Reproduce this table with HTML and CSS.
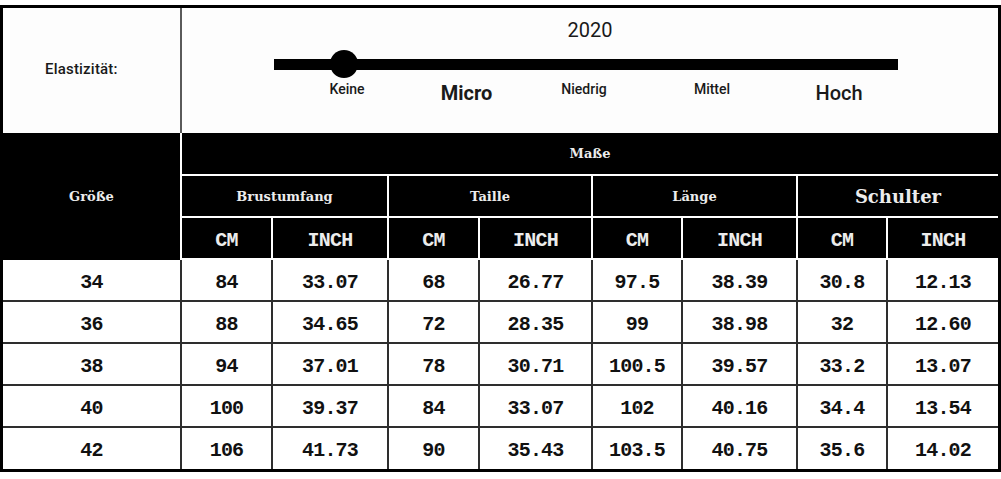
FILE: index.html
```html
<!DOCTYPE html>
<html lang="de">
<head>
<meta charset="utf-8">
<link rel="stylesheet" href="styles.css">
</head>
<body>
<table class="chart">
  <colgroup>
    <col class="c-size">
    <col class="c-91"><col class="c-116">
    <col class="c-91"><col class="c-113">
    <col class="c-90"><col class="c-115">
    <col class="c-90"><col class="c-110">
  </colgroup>
  <tr class="r-top">
    <td class="elast">Elastizität:</td>
    <td class="scale" colspan="8">
      <div class="year">2020</div>
      <div class="bar"><span class="knob"></span></div>
      <div class="labels">
        <span class="lbl sm">Keine</span>
        <span class="lbl lg b">Micro</span>
        <span class="lbl sm">Niedrig</span>
        <span class="lbl sm">Mittel</span>
        <span class="lbl lg">Hoch</span>
      </div>
    </td>
  </tr>
  <tr class="r-h1">
    <th class="hd size" rowspan="3">Größe</th>
    <th class="hd last" colspan="8">Maße</th>
  </tr>
  <tr class="r-h2">
    <th class="hd" colspan="2">Brustumfang</th>
    <th class="hd" colspan="2">Taille</th>
    <th class="hd" colspan="2">Länge</th>
    <th class="hd big last" colspan="2">Schulter</th>
  </tr>
  <tr class="r-h3">
    <th class="hd unit">CM</th><th class="hd unit">INCH</th>
    <th class="hd unit">CM</th><th class="hd unit">INCH</th>
    <th class="hd unit">CM</th><th class="hd unit">INCH</th>
    <th class="hd unit">CM</th><th class="hd unit last">INCH</th>
  </tr>
  <tr class="r-d">
    <td class="d">34</td><td class="d">84</td><td class="d">33.07</td><td class="d">68</td><td class="d">26.77</td><td class="d">97.5</td><td class="d">38.39</td><td class="d">30.8</td><td class="d last">12.13</td>
  </tr>
  <tr class="r-d">
    <td class="d">36</td><td class="d">88</td><td class="d">34.65</td><td class="d">72</td><td class="d">28.35</td><td class="d">99</td><td class="d">38.98</td><td class="d">32</td><td class="d last">12.60</td>
  </tr>
  <tr class="r-d">
    <td class="d">38</td><td class="d">94</td><td class="d">37.01</td><td class="d">78</td><td class="d">30.71</td><td class="d">100.5</td><td class="d">39.57</td><td class="d">33.2</td><td class="d last">13.07</td>
  </tr>
  <tr class="r-d">
    <td class="d">40</td><td class="d">100</td><td class="d">39.37</td><td class="d">84</td><td class="d">33.07</td><td class="d">102</td><td class="d">40.16</td><td class="d">34.4</td><td class="d last">13.54</td>
  </tr>
  <tr class="r-d r-end">
    <td class="d">42</td><td class="d">106</td><td class="d">41.73</td><td class="d">90</td><td class="d">35.43</td><td class="d">103.5</td><td class="d">40.75</td><td class="d">35.6</td><td class="d last">14.02</td>
  </tr>
</table>
</body>
</html>
```

FILE: styles.css
```css
html, body {
  margin: 0;
  padding: 0;
  background: #fff;
}
body {
  padding-top: 5px;
}
.chart {
  width: 1001px;
  table-layout: fixed;
  border-collapse: separate;
  border-spacing: 0;
  border: 3px solid #000;
  background: #fdfdfd;
}
.c-size { width: 179px; }
.c-91 { width: 91px; }
.c-116 { width: 116px; }
.c-113 { width: 113px; }
.c-90 { width: 90px; }
.c-115 { width: 115px; }
.c-110 { width: 110px; }

.chart td, .chart th {
  padding: 0;
  text-align: center;
  vertical-align: middle;
}
.r-top { height: 125px; }
.r-h1 { height: 43px; }
.r-h2 { height: 42px; }
.r-h3 { height: 42px; }
.r-d { height: 42px; }
.r-end { height: 41px; }

.elast {
  text-align: left !important;
  padding: 0 0 3px 42px !important;
  border-right: 2px solid #5a5a5a;
  font-family: Roboto, "Liberation Sans", sans-serif;
  font-weight: 500;
  font-size: 15px;
  letter-spacing: 0.2px;
  color: #1a1a1a;
}
.scale {
  vertical-align: top !important;
  font-family: Roboto, "Liberation Sans", sans-serif;
  color: #1a1a1a;
}
.year {
  padding-top: 10px;
  font-size: 20px;
  line-height: 24px;
  text-align: center;
}
.bar {
  position: relative;
  margin-top: 17px;
  margin-left: 92px;
  width: 624px;
  height: 11px;
  background: #000;
}
.knob {
  position: absolute;
  left: 56px;
  top: -9px;
  width: 28px;
  height: 28px;
  border-radius: 50%;
  background: #000;
}
.labels {
  display: grid;
  grid-template-columns: 120px 119px 116px 140px 114px;
  margin-left: 105px;
  align-items: start;
}
.lbl {
  text-align: center;
  white-space: nowrap;
}
.lbl.sm {
  margin-top: 11px;
  font-size: 14px;
  line-height: 16px;
  font-weight: 500;
}
.lbl.lg {
  margin-top: 11px;
  font-size: 20px;
  line-height: 24px;
  font-weight: 500;
}
.lbl.b { font-weight: 700; }

.hd {
  background: #000;
  color: #ececec;
  border-right: 2px solid #fff;
  border-bottom: 2px solid #fff;
  font-family: "DejaVu Serif", "Liberation Serif", serif;
  font-weight: 700;
  font-size: 13px;
}
.hd.size { border-bottom: 0; }
.hd.big { font-size: 18px; }
.hd.last { border-right: 0; }
.hd.unit {
  padding-top: 4px;
  font-family: "Liberation Mono", monospace;
  font-size: 20px;
  letter-spacing: -0.8px;
}
.d {
  padding-top: 4px !important;
  background: #fff;
  color: #111;
  border-right: 2px solid #2e2e2e;
  border-bottom: 2px solid #2e2e2e;
  font-family: "Liberation Mono", monospace;
  font-weight: 700;
  font-size: 20px;
  letter-spacing: -0.8px;
}
.d.last { border-right: 0; }
.r-end .d { border-bottom: 0; }
```
